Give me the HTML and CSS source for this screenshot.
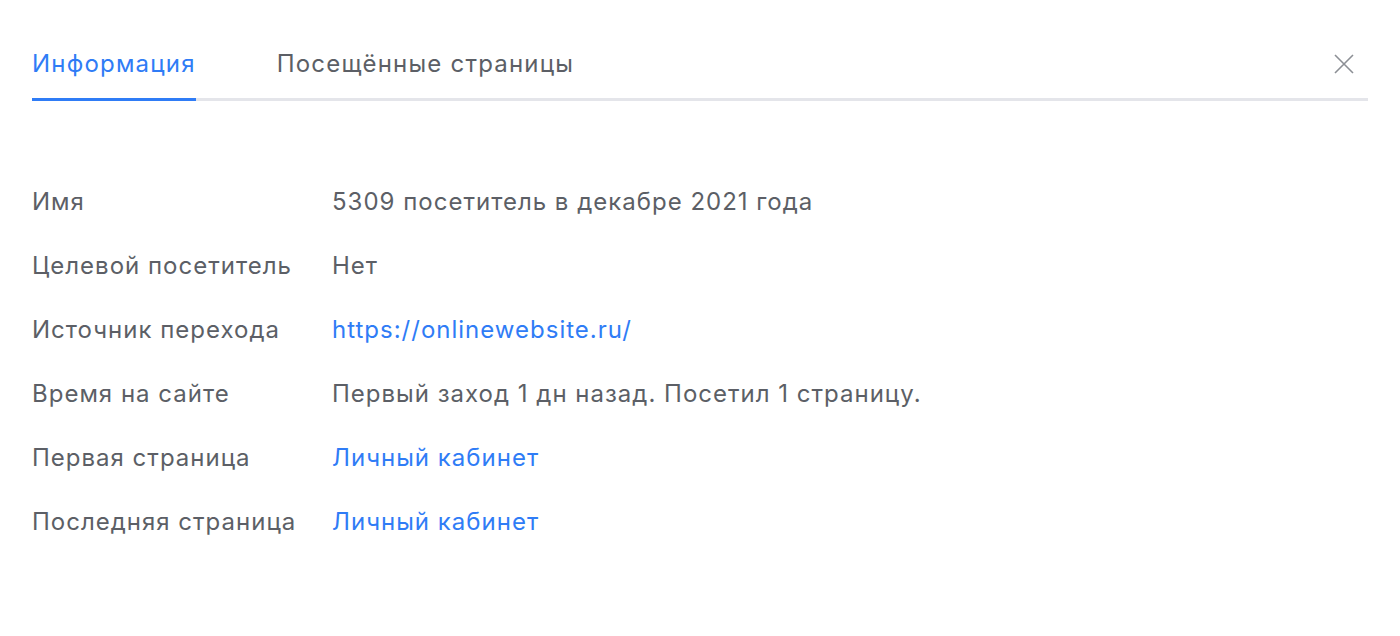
FILE: index.html
```html
<!DOCTYPE html>
<html lang="ru">
<head>
<meta charset="utf-8">
<link rel="stylesheet" href="styles.css">
</head>
<body>
<div class="modal">
  <div class="tabs-row">
    <div class="tabs">
      <div class="tab active">Информация</div>
      <div class="tab">Посещённые страницы</div>
    </div>
    <button class="close" aria-label="Закрыть">
      <svg width="20" height="20" viewBox="0 0 20 20"><path d="M1 1L19 19M19 1L1 19" stroke="#8c8f95" stroke-width="1.6" fill="none"/></svg>
    </button>
  </div>
  <div class="info">
    <div class="row"><div class="label">Имя</div><div class="value">5309 посетитель в декабре 2021 года</div></div>
    <div class="row"><div class="label">Целевой посетитель</div><div class="value">Нет</div></div>
    <div class="row"><div class="label">Источник перехода</div><a class="value link" href="#">https://onlinewebsite.ru/</a></div>
    <div class="row"><div class="label">Время на сайте</div><div class="value">Первый заход 1 дн назад. Посетил 1 страницу.</div></div>
    <div class="row"><div class="label">Первая страница</div><a class="value link" href="#">Личный кабинет</a></div>
    <div class="row"><div class="label">Последняя страница</div><a class="value link" href="#">Личный кабинет</a></div>
  </div>
</div>
</body>
</html>
```

FILE: styles.css
```css
html, body {
  margin: 0;
  padding: 0;
  background: #ffffff;
}
body {
  font-family: Inter, "Liberation Sans", Arial, sans-serif;
  color: #5c5f66;
}
.modal {
  width: 1400px;
  height: 636px;
  box-sizing: border-box;
  padding: 0 32px;
}
.tabs-row {
  position: relative;
  display: flex;
  height: 101px;
}
.tabs {
  flex: 1;
  display: flex;
  gap: 81px;
  border-bottom: 3px solid #e4e5ea;
  height: 101px;
  box-sizing: border-box;
}
.tab {
  font-size: 24px;
  letter-spacing: 1.2px;
  color: #5c5f66;
  padding-top: 52px;
  height: 101px;
  box-sizing: border-box;
  margin-bottom: -3px;
  line-height: 24px;
}
.tab.active {
  color: #2f7cf6;
  border-bottom: 3px solid #2f7cf6;
}
.close {
  position: absolute;
  right: 14px;
  top: 54px;
  width: 20px;
  height: 20px;
  padding: 0;
  border: 0;
  background: none;
  display: block;
}
.info {
  padding-top: 89px;
  display: flex;
  flex-direction: column;
  gap: 40px;
}
.row {
  display: flex;
  font-size: 24px;
  letter-spacing: 1px;
  line-height: 24px;
}
.label {
  width: 300px;
  color: #5c5f66;
}
.value {
  color: #5c5f66;
}
.link {
  color: #2f7cf6;
  text-decoration: none;
}
```
